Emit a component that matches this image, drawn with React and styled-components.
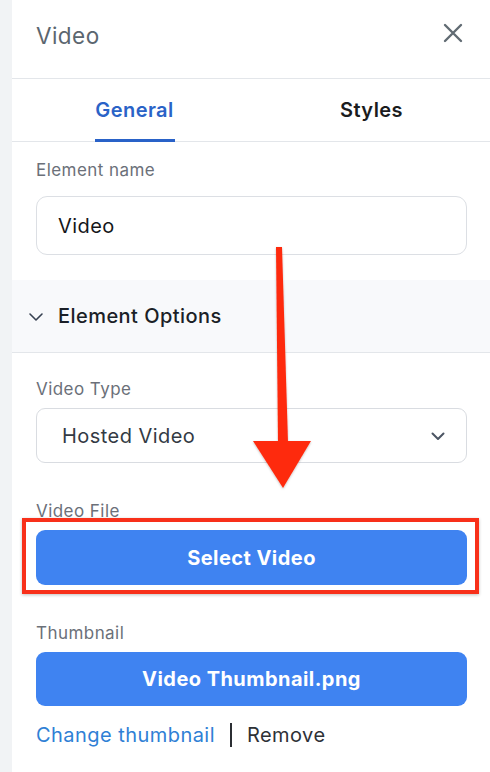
import React from 'react'
import styled, { createGlobalStyle } from 'styled-components'

const Global = createGlobalStyle`
  html, body { margin: 0; padding: 0; background: #f1f3f5; }
  body {
    font-family: Inter, "Noto Sans", "Liberation Sans", sans-serif;
    letter-spacing: 0.45px;
  }
  * { box-sizing: border-box; }
`

export default function App() {
  return (
    <>
      <Global />
      <Page>
        <Panel>
          <Header>
            <Title>Video</Title>
            <CloseBtn aria-label="Close">
              <svg width="22" height="22" viewBox="0 0 22 22" fill="none" stroke="#616b73" strokeWidth="2.4" strokeLinecap="round">
                <path d="M3 3 L19 19 M19 3 L3 19" />
              </svg>
            </CloseBtn>
          </Header>
          <Tabs>
            <Tab $active>General</Tab>
            <Tab>Styles</Tab>
          </Tabs>

          <Section $top={18} $bottom={25}>
            <Label $gap={16}>Element name</Label>
            <Input>Video</Input>
          </Section>

          <Accordion>
            <svg width="20" height="20" viewBox="0 0 20 20" fill="none" stroke="#374151" strokeWidth="1.6" strokeLinecap="round" strokeLinejoin="round">
              <path d="M4 7 L10 13 L16 7" />
            </svg>
            <span>Element Options</span>
          </Accordion>

          <Section $top={26} $bottom={40}>
            <Label $gap={9}>Video Type</Label>
            <Select>
              <span>Hosted Video</span>
              <svg width="18" height="18" viewBox="0 0 18 18" fill="none" stroke="#4b5563" strokeWidth="2" strokeLinecap="round" strokeLinejoin="round">
                <path d="M3.5 6.5 L9 12 L14.5 6.5" />
              </svg>
            </Select>

            <Label $gap={9} $space={38}>Video File</Label>
            <Highlighted>
              <BlueButton $h={55}>Select Video</BlueButton>
              <RedBox />
            </Highlighted>

            <Label $gap={9} $space={38}>Thumbnail</Label>
            <BlueButton $h={54}>Video Thumbnail.png</BlueButton>
            <Links>
              <LinkText>Change thumbnail</LinkText>
              <Sep />
              <Plain>Remove</Plain>
            </Links>
          </Section>
        </Panel>

        <Arrow width="80" height="260" viewBox="0 0 80 260">
          <defs>
            <filter id="sh" x="-30%" y="-10%" width="160%" height="120%">
              <feDropShadow dx="0" dy="1" stdDeviation="1.2" floodColor="#000" floodOpacity="0.25" />
            </filter>
          </defs>
          <g filter="url(#sh)" fill="#fe2c10">
            <polygon points="31,7 37,7 43,202 33,202" />
            <polygon points="8,201 66,201 38,248" />
          </g>
        </Arrow>
      </Page>
    </>
  )
}

const Page = styled.div`
  position: relative;
  width: 490px;
  height: 772px;
  padding-left: 12px;
  overflow: hidden;
`

const Panel = styled.div`
  background: #fff;
  height: 100%;
`

const Header = styled.div`
  height: 79px;
  display: flex;
  align-items: center;
  justify-content: space-between;
  padding: 0 26px 8px 24px;
  border-bottom: 1px solid #e3e6ea;
`

const Title = styled.div`
  font-size: 22.5px;
  color: #5b666f;
`

const CloseBtn = styled.button`
  border: none;
  background: none;
  padding: 0;
  display: flex;
  margin-top: -4px;
`

const Tabs = styled.div`
  display: grid;
  grid-template-columns: 1fr 1fr;
  height: 63px;
  padding-left: 4px;
  border-bottom: 1px solid #e3e6ea;
`

const Tab = styled.div`
  display: flex;
  justify-content: center;
  align-items: center;
  font-size: 20px;
  font-weight: 600;
  color: ${p => (p.$active ? '#2a63c7' : '#1b1c1e')};
  position: relative;
  &::after {
    content: '';
    display: ${p => (p.$active ? 'block' : 'none')};
    position: absolute;
    bottom: -1px;
    left: 50%;
    transform: translateX(-50%);
    width: 80px;
    height: 3px;
    background: #2962c8;
  }
`

const Section = styled.div`
  padding: ${p => p.$top}px 23px ${p => p.$bottom}px 24px;
  display: flex;
  flex-direction: column;
`

const Label = styled.div`
  font-size: 17px;
  line-height: 20px;
  color: #6b7079;
  margin-top: ${p => p.$space || 0}px;
  margin-bottom: ${p => p.$gap}px;
`

const Input = styled.div`
  height: 59px;
  border: 1px solid #dcdfe4;
  border-radius: 11px;
  display: flex;
  align-items: center;
  padding-left: 21px;
  font-size: 20px;
  color: #15171a;
`

const Accordion = styled.div`
  height: 73px;
  background: #f8f9fb;
  border-bottom: 1px solid #e3e6ea;
  display: flex;
  align-items: center;
  gap: 12px;
  padding-left: 14px;
  font-size: 20px;
  font-weight: 500;
  color: #1b1f27;
  svg { margin-top: 1px; }
`

const Select = styled.div`
  height: 55px;
  border: 1px solid #d9dce1;
  border-radius: 9px;
  display: flex;
  align-items: center;
  justify-content: space-between;
  padding: 0 19px 0 25px;
  font-size: 20px;
  color: #333a44;
`

const Highlighted = styled.div`
  position: relative;
`

const RedBox = styled.div`
  position: absolute;
  top: -12px;
  bottom: -9px;
  left: -14px;
  right: -12px;
  border: 4px solid #f8301a;
  box-shadow: 0 1px 3px rgba(0, 0, 0, 0.25);
  pointer-events: none;
`

const BlueButton = styled.div`
  height: ${p => p.$h}px;
  background: #3f83f1;
  border-radius: 9px;
  display: flex;
  align-items: center;
  justify-content: center;
  color: #fff;
  font-size: 20px;
  font-weight: 700;
`

const Links = styled.div`
  display: flex;
  align-items: center;
  margin-top: 15px;
  height: 28px;
  font-size: 20px;
`

const LinkText = styled.span`
  color: #2f80d5;
`

const Sep = styled.span`
  width: 2px;
  height: 24px;
  background: #2b2e33;
  margin: 0 15px 0 15px;
`

const Plain = styled.span`
  color: #2e3136;
`

const Arrow = styled.svg`
  position: absolute;
  left: 245px;
  top: 240px;
  pointer-events: none;
`
